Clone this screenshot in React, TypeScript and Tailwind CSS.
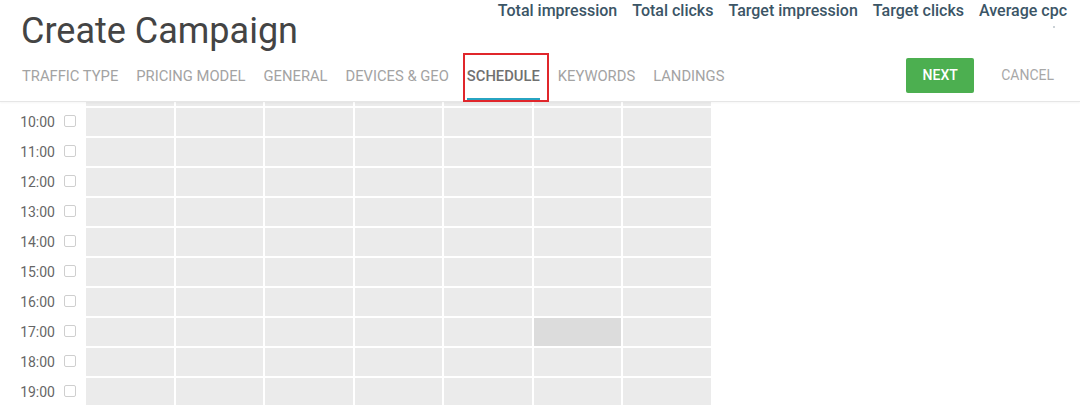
const stats = ['Total impression', 'Total clicks', 'Target impression', 'Target clicks', 'Average cpc'];
const tabs = ['Traffic type', 'Pricing model', 'General', 'Devices & geo', 'Schedule', 'Keywords', 'Landings'];
const hours = ['09:00', '10:00', '11:00', '12:00', '13:00', '14:00', '15:00', '16:00', '17:00', '18:00', '19:00', '20:00'];

const Header = () => {
  return (
    <header className="relative z-10 h-[102px] shrink-0 border-b border-[#e6e6e6] bg-white shadow-[0_1px_2px_rgba(0,0,0,0.04)]">
      <div className="flex items-start justify-between pl-[21px] pr-[13px]">
        <h1 className="mt-[11px] text-[36px] leading-[40px] font-normal text-[#444444]">Create Campaign</h1>
        <div className="flex gap-[15px] pt-[2px] text-[16px] leading-[18px] font-medium text-[#3b5566]">
          {stats.map((s) => (
            <span key={s}>{s}</span>
          ))}
        </div>
      </div>

      {/* tiny mark under the stats */}
      <span className="absolute left-[1053px] top-[26px] h-[2px] w-[2px] rounded-full bg-[#b8c2c8]" />

      <div className="mt-[7px] flex h-[43px] justify-between pl-[22px] pr-[26px]">
        <nav className="flex gap-[18px] self-end">
          {tabs.map((t) => {
            const active = t === 'Schedule';
            return (
              <div
                key={t}
                className={`relative border-b-[3px] pb-[13px] text-[14.75px] leading-[17px] uppercase ${
                  active ? 'border-[#27a4c2] font-medium text-[#707070]' : 'border-transparent text-[#a3a3a3]'
                }`}
              >
                {t}
                {active && (
                  <span className="pointer-events-none absolute -left-[4px] -right-[9px] -top-[15px] -bottom-[4px] border-2 border-[#e0262b]" />
                )}
              </div>
            );
          })}
        </nav>
        <div className="flex items-center gap-[27px] self-start">
          <button className="h-[35px] w-[68px] rounded-[2px] bg-[#4caf50] text-[14px] font-medium text-white">
            NEXT
          </button>
          <span className="text-[14px] text-[#a8a8a8]">CANCEL</span>
        </div>
      </div>
    </header>
  );
};

const Row = ({ hour }: { hour: string }) => {
  return (
    <div className="flex h-[30px]">
      <div className="flex w-[86px] items-start justify-end gap-[9px] pr-[10px]">
        <span className="mt-[5px] text-[14px] leading-[18px] text-[#666666]">{hour}</span>
        <span className="mt-[7px] h-[12px] w-[12px] rounded-[2px] border border-[#cfcfcf] bg-white" />
      </div>
      <div className="grid h-[28px] w-[625px] grid-cols-7 gap-x-[2px]">
        {Array.from({ length: 7 }).map((_, i) => (
          <div key={i} className={hour === '17:00' && i === 5 ? 'bg-[#dcdcdc]' : 'bg-[#ebebeb]'} />
        ))}
      </div>
    </div>
  );
};

export default function App() {
  return (
    <div className="flex h-[405px] w-[1080px] flex-col overflow-hidden bg-white font-['Roboto',sans-serif]">
      <Header />
      {/* schedule list, scrolled down a little */}
      <div className="min-h-0 flex-1 overflow-hidden">
        <div className="-mt-[24px]">
          {hours.map((h) => (
            <Row key={h} hour={h} />
          ))}
        </div>
      </div>
    </div>
  );
}
